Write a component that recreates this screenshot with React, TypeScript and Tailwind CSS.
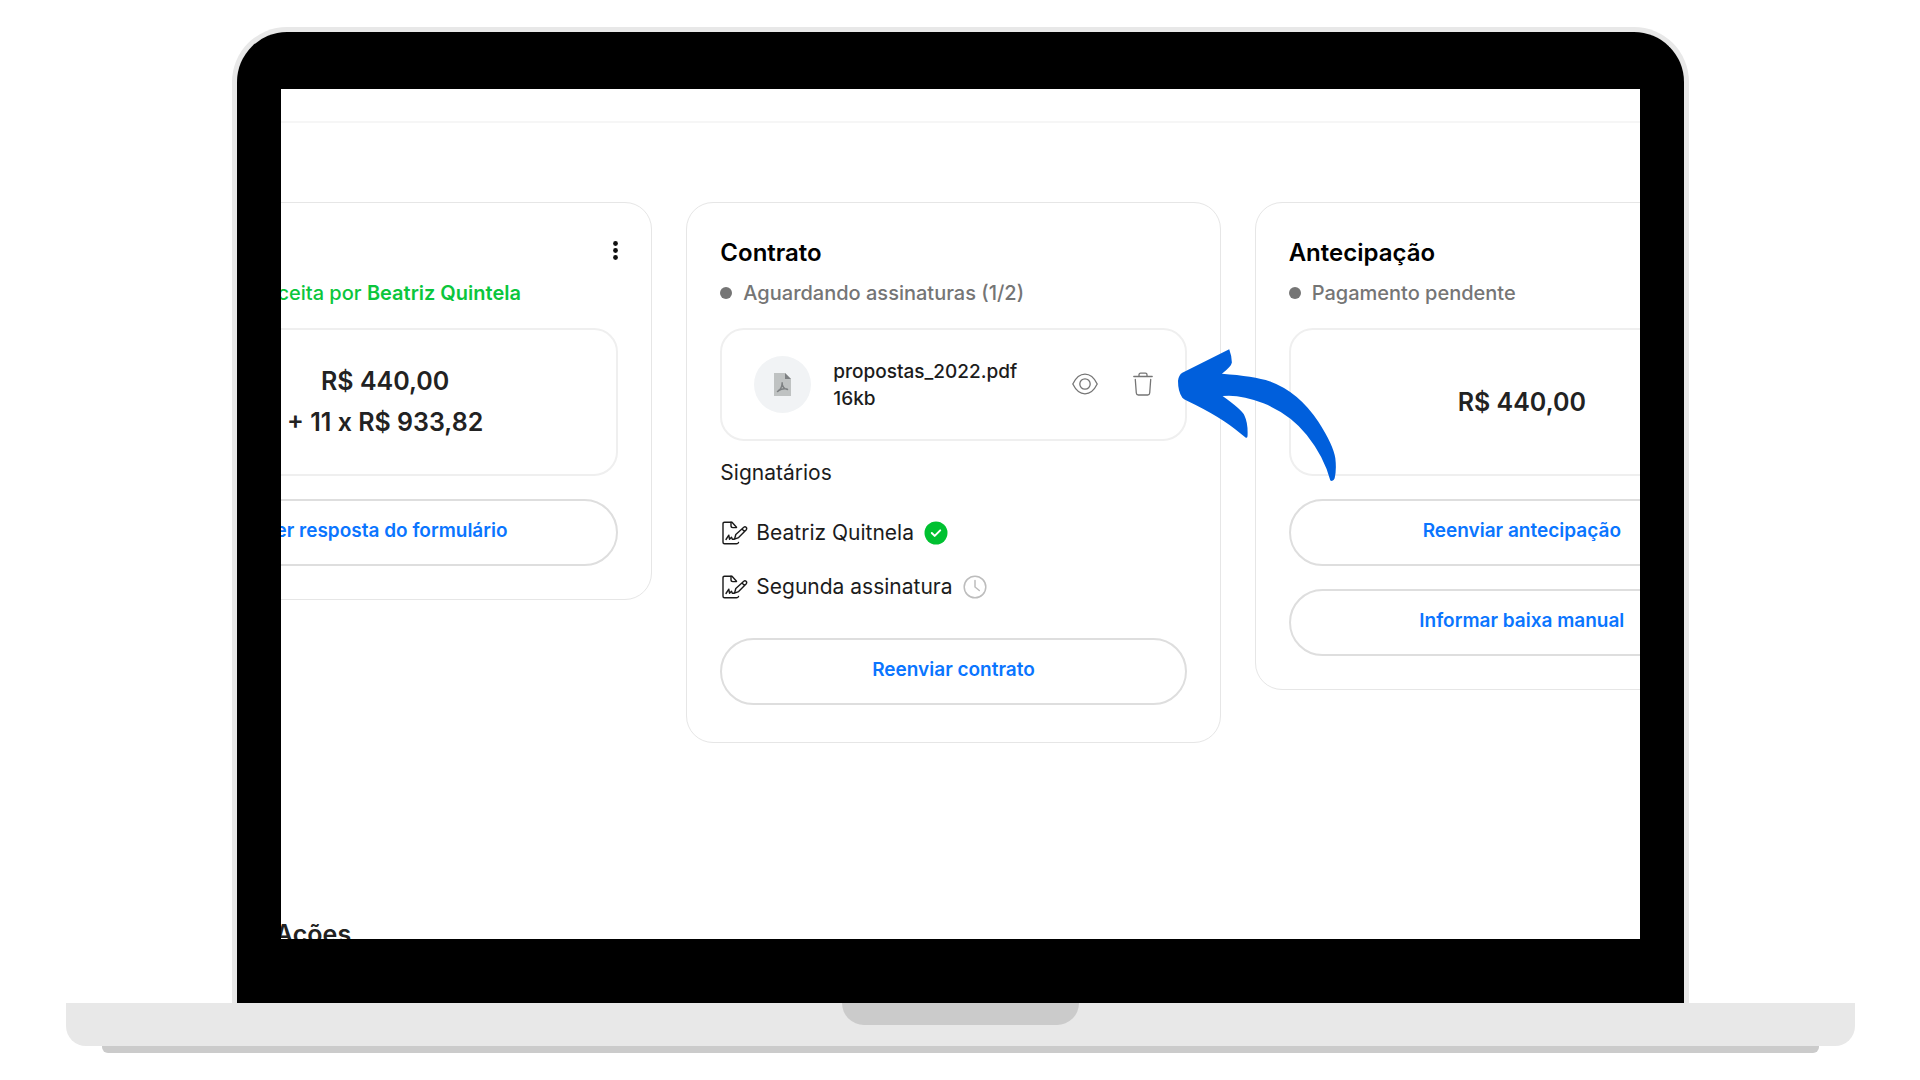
import type { ReactNode } from 'react';

function MoreIcon() {
  return (
    <svg viewBox="0 0 5 19" className="h-[19px] w-[5px]" fill="#111">
      <circle cx="2.5" cy="2.5" r="2.4" />
      <circle cx="2.5" cy="9.5" r="2.4" />
      <circle cx="2.5" cy="16.5" r="2.4" />
    </svg>
  );
}

function PdfIcon() {
  return (
    <svg viewBox="0 0 17 23" className="h-[23px] w-[17px]">
      <path d="M0 0h11l6 6v17H0z" fill="#bfc2c2" />
      <path d="M11 0l6 6h-6z" fill="#7d8082" />
      <path
        d="M3.5 18.5c2-1 4.3-4 4.8-8.500M8 10c.3 3.500 2.500 6 5.500 6.500M4.500 17.500c2.500-1.500 5.500-2 8.500-1.500"
        fill="none"
        stroke="#7d8082"
        strokeWidth="1.5"
        strokeLinecap="round"
      />
    </svg>
  );
}

function EyeIcon() {
  return (
    <svg viewBox="0 0 26 22" className="h-[22px] w-[26px]" fill="none" stroke="#757575" strokeWidth="1.3">
      <path d="M.8 11C4 4.500 8 1.200 13 1.200S22 4.500 25.200 11C22 17.500 18 20.800 13 20.800S4 17.500.8 11z" />
      <circle cx="13" cy="11" r="5.2" />
    </svg>
  );
}

function TrashIcon() {
  return (
    <svg viewBox="0 0 20 24" className="h-6 w-5" fill="none" stroke="#757575" strokeWidth="1.3" strokeLinecap="round" strokeLinejoin="round">
      <path d="M.8 4.500h18.400M6 4.500V2.800q0-1.600 1.600-1.600h4.800q1.600 0 1.600 1.600v1.700" />
      <path d="M2.300 7.500l1 13.500q.2 2 2 2h9.400q1.800 0 2-2l1-13.500" />
    </svg>
  );
}

function SignIcon() {
  return (
    <svg viewBox="0 0 26 24" className="h-6 w-[26px]" fill="none" stroke="#1a1a1a" strokeWidth="1.4" strokeLinecap="round" strokeLinejoin="round">
      <path d="M14.500 6.200L10 1.200H2.500q-1.500 0-1.500 1.500v18.600q0 1.500 1.500 1.500h12q1.500 0 2-1.300" />
      <path d="M9 1.200v3.600q0 1.800 1.800 1.800h3.700" />
      <path d="M4 18.500l2.800-4.300.7 4 2-2 .8 2h1.500" />
      <path d="M12.500 18.200l1.300-4.700 8-7.300q1.200-1 2.300.1t.2 2.400l-7.700 7.900zM20 8l2.500 2.500" />
    </svg>
  );
}

function SignedIcon() {
  return (
    <svg viewBox="0 0 24 24" className="h-6 w-6" role="img" aria-label="Assinado">
      <circle cx="12" cy="12" r="11.5" fill="#00c131" />
      <path d="M7.800 12l2.900 2.900 5.500-5.500" fill="none" stroke="#fff" strokeWidth="2" strokeLinecap="round" strokeLinejoin="round" />
    </svg>
  );
}

function PendingIcon() {
  return (
    <svg viewBox="0 0 24 24" className="h-6 w-6" fill="none" stroke="#bdbdbd" strokeWidth="1.5" strokeLinecap="round" role="img" aria-label="Pendente">
      <circle cx="12" cy="12" r="10.8" />
      <path d="M12 5.500v6.500l4.300 3.500" />
    </svg>
  );
}

function Arrow() {
  return (
    <svg viewBox="53 57 475 396" className="absolute left-full top-[19px] z-10 -ml-[7px] h-[132px] w-[158px]" fill="#005fdc">
      <path d="M207 57L66 128Q55 135 53 152Q53 185 66 203Q70 208 80 212Q185 262 240 310L256 323Q261 325 262 319Q264 280 253 257Q246 240 187 198Q240 192 310 220Q390 252 440 315Q492 380 511 452Q520 456 524 445Q530 420 526 385Q520 345 475 275Q415 185 330 154Q280 138 185 131Q214 108 215 97Q214 75 207 57Z" />
    </svg>
  );
}

function Card({ children }: { children: ReactNode }) {
  return <section className="rounded-[27px] border border-[#e6e6e6] px-[33px] pb-[33px] pt-[34px]">{children}</section>;
}

function Title({ children }: { children: ReactNode }) {
  return <h2 className="text-2xl leading-8 font-semibold text-black">{children}</h2>;
}

function Status({ children, tone = 'text-[#757575]' }: { children: ReactNode; tone?: string }) {
  return (
    <p className={`mt-[10px] flex items-center gap-[11px] text-xl leading-7 font-medium whitespace-nowrap ${tone}`}>
      <span className="size-3 shrink-0 rounded-full bg-current" />
      <span>{children}</span>
    </p>
  );
}

function Amount({ children }: { children: ReactNode }) {
  return (
    <div className="mt-[21px] flex h-[148px] flex-col items-center justify-center rounded-3xl border-2 border-[#efefef] text-[25px] leading-[41px] font-semibold text-[#222]">
      {children}
    </div>
  );
}

function Action({ children }: { children: ReactNode }) {
  return (
    <button
      type="button"
      className="flex h-[67px] w-full items-center justify-center rounded-full border-2 border-[#dedede] pb-1 text-[19px] leading-7 font-semibold text-[#0a75ff]"
    >
      {children}
    </button>
  );
}

function Signer({ name, children }: { name: string; children: ReactNode }) {
  return (
    <li className="flex items-center gap-[10px] pl-0.5">
      <span className="flex items-center gap-2">
        <SignIcon />
        {name}
      </span>
      {children}
    </li>
  );
}

function Proposta() {
  return (
    <Card>
      <div className="flex h-8 items-start justify-end pt-1">
        <button type="button" aria-label="Mais opções">
          <MoreIcon />
        </button>
      </div>
      <Status tone="text-[#0bc63c]">
        Proposta aceita por <span className="font-semibold">Beatriz Quintela</span>
      </Status>
      <Amount>
        <p>R$ 440,00</p>
        <p>+ 11 x R$ 933,82</p>
      </Amount>
      <div className="mt-[23px]">
        <Action>Ver resposta do formulário</Action>
      </div>
    </Card>
  );
}

function Contrato() {
  return (
    <Card>
      <Title>Contrato</Title>
      <Status>Aguardando assinaturas (1/2)</Status>
      <div className="relative mt-[21px] flex items-center rounded-3xl border-2 border-[#efefef] px-8 py-[26px]">
        <span className="flex size-[57px] shrink-0 items-center justify-center rounded-full bg-[#f1f3f5]">
          <PdfIcon />
        </span>
        <div className="ml-[22px] flex-1 text-[19px] leading-[27px] font-medium text-[#1c1c1c]">
          <p>propostas_2022.pdf</p>
          <p>16kb</p>
        </div>
        <div className="flex items-center gap-[35px] pb-0.5">
          <button type="button" aria-label="Visualizar">
            <EyeIcon />
          </button>
          <button type="button" aria-label="Excluir">
            <TrashIcon />
          </button>
        </div>
        <Arrow />
      </div>
      <div className="text-[21px] leading-8 text-[#1c1c1c]">
        <h3 className="mt-4">Signatários</h3>
        <ul className="mt-7 mb-[35px] flex flex-col gap-[22px]">
          <Signer name="Beatriz Quitnela">
            <SignedIcon />
          </Signer>
          <Signer name="Segunda assinatura">
            <PendingIcon />
          </Signer>
        </ul>
      </div>
      <div className="pb-1">
        <Action>Reenviar contrato</Action>
      </div>
    </Card>
  );
}

function Antecipacao() {
  return (
    <Card>
      <Title>Antecipação</Title>
      <Status>Pagamento pendente</Status>
      <Amount>
        <p>R$ 440,00</p>
      </Amount>
      <div className="mt-[23px] flex flex-col gap-[23px]">
        <Action>Reenviar antecipação</Action>
        <Action>Informar baixa manual</Action>
      </div>
    </Card>
  );
}

export default function App() {
  return (
    <div className="min-h-screen overflow-hidden bg-white pt-[27px] pr-[65px] pl-[66px] font-['Inter','Liberation_Sans',sans-serif]">
      <div className="mx-[166px] rounded-t-[55px] border-x-[5px] border-t-[5px] border-[#e8e8e8] bg-black px-11 pt-[57px] pb-16">
        <main className="aspect-[1359/850] overflow-hidden bg-white">
          <div className="h-[34px] border-b-2 border-[#f6f6f6]" />
          <div className="-mr-[149px] -ml-[163px] pt-[79px]">
            <div className="grid grid-cols-3 items-start gap-[34px]">
              <Proposta />
              <Contrato />
              <Antecipacao />
            </div>
            <h2 className="mt-[175px] pl-[157px] text-[25px] leading-8 font-semibold text-[#222]">Ações</h2>
          </div>
        </main>
      </div>
      <div className="flex h-[43px] justify-center rounded-b-[20px] bg-[#e8e8e8]">
        <div className="h-[22px] w-[237px] rounded-b-[22px] bg-[#cbcbcb]" />
      </div>
      <div className="mx-9 h-[7px] rounded-b-[6px] bg-[#cbcbcb]" />
    </div>
  );
}
